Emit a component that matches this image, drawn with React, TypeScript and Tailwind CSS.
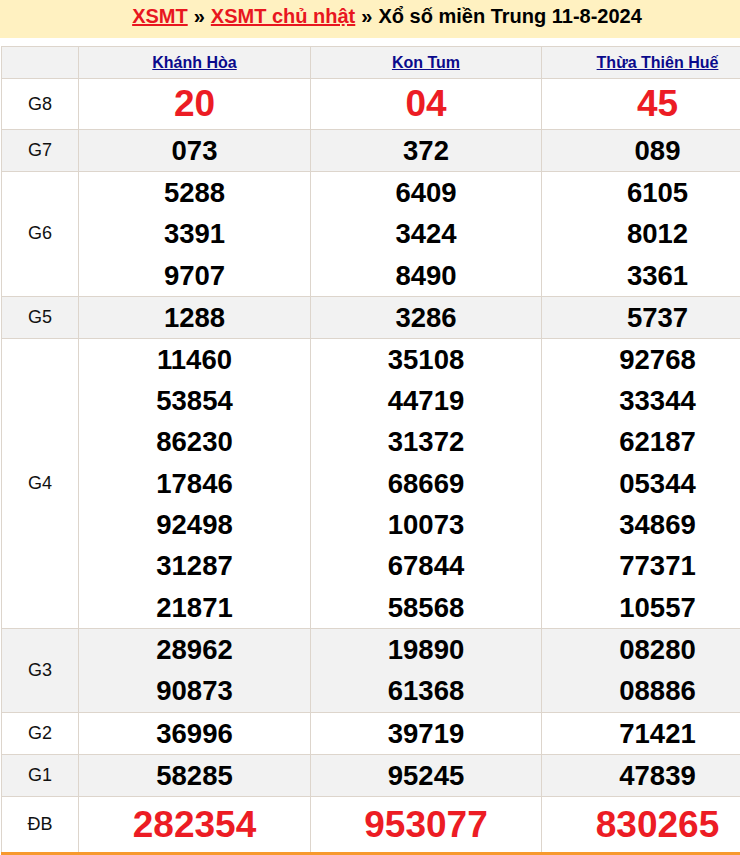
const provinces = ["Khánh Hòa", "Kon Tum", "Thừa Thiên Huế"];

type Row = { label: string; values: string[][]; big?: boolean; alt?: boolean };

const rows: Row[] = [
  { label: "G8", values: [["20"], ["04"], ["45"]], big: true },
  { label: "G7", values: [["073"], ["372"], ["089"]], alt: true },
  {
    label: "G6",
    values: [
      ["5288", "3391", "9707"],
      ["6409", "3424", "8490"],
      ["6105", "8012", "3361"],
    ],
  },
  { label: "G5", values: [["1288"], ["3286"], ["5737"]], alt: true },
  {
    label: "G4",
    values: [
      ["11460", "53854", "86230", "17846", "92498", "31287", "21871"],
      ["35108", "44719", "31372", "68669", "10073", "67844", "58568"],
      ["92768", "33344", "62187", "05344", "34869", "77371", "10557"],
    ],
  },
  {
    label: "G3",
    values: [
      ["28962", "90873"],
      ["19890", "61368"],
      ["08280", "08886"],
    ],
    alt: true,
  },
  { label: "G2", values: [["36996"], ["39719"], ["71421"]] },
  { label: "G1", values: [["58285"], ["95245"], ["47839"]], alt: true },
  { label: "ĐB", values: [["282354"], ["953077"], ["830265"]], big: true },
];

export default function App() {
  return (
    <div
      className="w-[740px] h-[855px] overflow-hidden bg-white"
      style={{ fontFamily: '"Liberation Sans", Arial, sans-serif' }}
    >
      <div className="w-[774px]">
        {/* tiêu đề */}
        <div className="h-[38px] bg-[#fff1c1] flex items-center justify-center text-[20px] font-bold text-black pb-[7px]">
          <a href="#" className="text-[#e8161f] underline">XSMT</a>
          <span className="mx-[6px]">»</span>
          <a href="#" className="text-[#e8161f] underline">XSMT chủ nhật</a>
          <span className="mx-[6px]">»</span>
          <span>Xổ số miền Trung 11-8-2024</span>
        </div>

        <div className="h-[8px]" />

        <table className="ml-[1px] w-[772px] border-collapse table-fixed border-b-[3px] border-b-[#f7992d]">
          <colgroup>
            <col className="w-[77px]" />
            <col className="w-[232px]" />
            <col className="w-[231px]" />
            <col className="w-[232px]" />
          </colgroup>
          <thead>
            <tr className="bg-[#f2f2f2] h-[32px]">
              <th className="border border-[#ddd5cc]" />
              {provinces.map((p) => (
                <th key={p} className="border border-[#ddd5cc] text-center font-bold text-[16px]">
                  <a href="#" className="text-[#0a0a8c] underline">{p}</a>
                </th>
              ))}
            </tr>
          </thead>
          <tbody>
            {rows.map((row) => (
              <tr key={row.label} className={row.alt ? "bg-[#f2f2f2]" : "bg-white"}>
                <td className="border border-[#ddd5cc] text-center text-[18px] text-[#111]">
                  {row.label}
                </td>
                {row.values.map((col, i) => (
                  <td key={i} className="border border-[#ddd5cc] text-center p-0">
                    {col.map((v, j) => (
                      <div
                        key={j}
                        className={
                          row.big
                            ? `font-bold text-[37px] text-[#ec1c24] ${row.label === "G8" ? "leading-[50px]" : "leading-[55px]"}`
                            : `font-bold text-[27.5px] text-black ${col.length > 1 ? "leading-[41.3px]" : "leading-[41px]"}`
                        }
                      >
                        {v}
                      </div>
                    ))}
                  </td>
                ))}
              </tr>
            ))}
          </tbody>
        </table>
      </div>
    </div>
  );
}
